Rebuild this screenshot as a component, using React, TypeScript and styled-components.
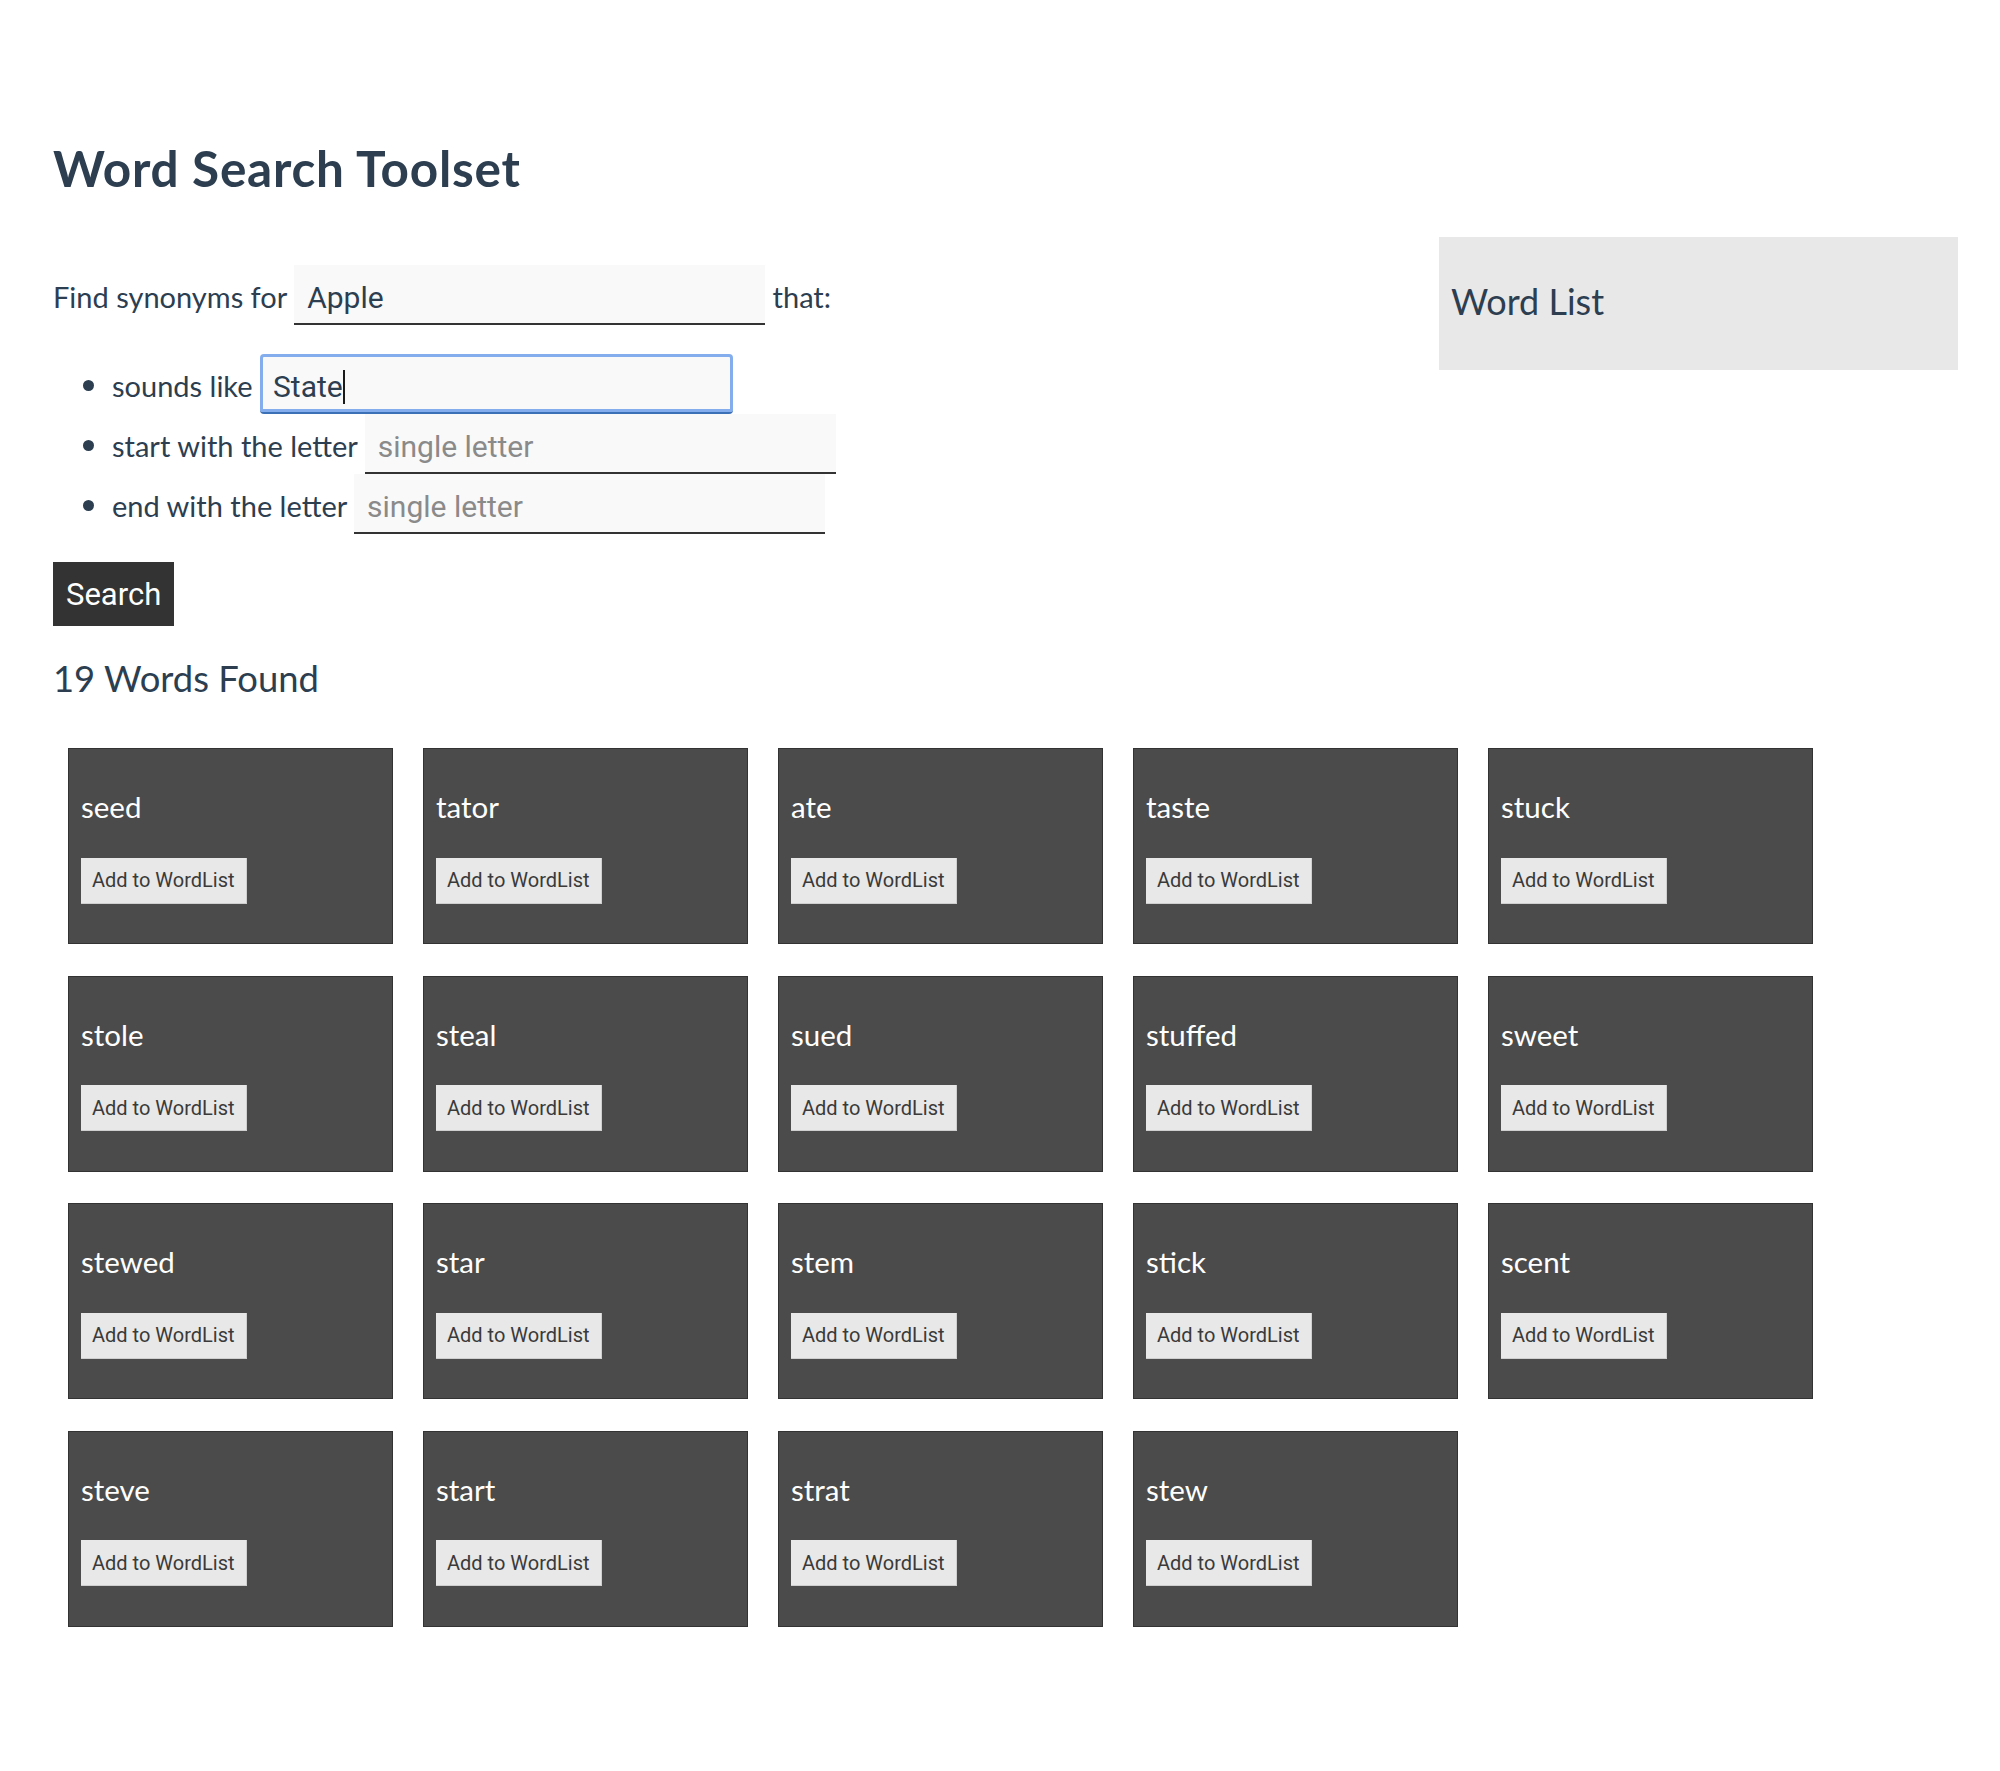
import React from "react";
import styled, { createGlobalStyle, css } from "styled-components";

const GlobalStyle = createGlobalStyle`
  html, body { margin: 0; padding: 0; background: #ffffff; }
  body {
    font-family: Lato, "Noto Sans", sans-serif;
    color: #2c3e50;
    -webkit-font-smoothing: antialiased;
  }
  * { box-sizing: border-box; }
`;

const Page = styled.div`
  padding: 0 42px 120px 53px;
`;

const Top = styled.div`
  display: flex;
  align-items: flex-start;
  justify-content: space-between;
`;

const Main = styled.div`
  flex: 1;
`;

const Title = styled.h1`
  margin: 138px 0 0;
  font-size: 49.5px;
  font-weight: 700;
  line-height: normal;
  letter-spacing: 0.75px;
`;

const Form = styled.form`
  margin: 0;
`;

const Line = styled.div`
  margin-top: 67px;
  font-size: 29px;
  line-height: normal;
  white-space: nowrap;
`;

const Criteria = styled.ul`
  margin: 29px 0 28px;
  padding-left: 59px;
  font-size: 29px;
  line-height: normal;
`;

const Criterion = styled.li`
  white-space: nowrap;
  &::marker { font-size: 33px; }
`;

const Field = styled.span`
  position: relative;
  display: inline-block;
  vertical-align: baseline;
`;

const TextInput = styled.input<{ $focused?: boolean }>`
  width: 471px;
  height: 60px;
  padding: 6px 13px 0;
  border: none;
  border-bottom: 2px solid #333;
  background: #f9f9f9;
  font-family: Roboto, "Liberation Sans", sans-serif;
  font-size: 30px;
  color: #2c3e50;
  vertical-align: baseline;
  outline: none;
  &::placeholder { color: #8a8a8a; }
  ${(p) =>
    p.$focused &&
    css`
      width: 473px;
      border-radius: 4px;
      border-bottom-color: #3b6fb6;
      box-shadow: inset 0 0 0 3px rgba(110, 160, 235, 0.85);
    `}
`;

const Caret = styled.span`
  position: absolute;
  left: 83px;
  top: 16px;
  width: 2px;
  height: 34px;
  background: #1a1a1a;
`;

const SearchButton = styled.button`
  display: block;
  height: 64px;
  padding: 0 13px;
  border: none;
  background: #333333;
  color: #ffffff;
  font-family: Roboto, "Liberation Sans", sans-serif;
  font-size: 31px;
  cursor: pointer;
`;

const Count = styled.h2`
  margin: 30px 0 0;
  font-size: 36.4px;
  font-weight: 400;
  line-height: normal;
`;

const WordListPanel = styled.aside`
  width: 519px;
  height: 133px;
  margin-top: 237px;
  padding: 0 12px 5px;
  background: #e8e8e8;
  display: flex;
  align-items: center;
`;

const PanelTitle = styled.h2`
  margin: 0;
  font-size: 36px;
  font-weight: 400;
  line-height: normal;
`;

const Results = styled.div`
  margin: 48px 0 0 15px;
  display: grid;
  grid-template-columns: repeat(5, 325px);
  column-gap: 30px;
  row-gap: 31.5px;
`;

const Card = styled.div`
  height: 196px;
  padding: 0 12px;
  background: #4b4b4b;
  border: 1px solid #333333;
  display: flex;
  flex-direction: column;
  align-items: flex-start;
`;

const Word = styled.div`
  margin-top: 40px;
  font-size: 29.5px;
  line-height: 36px;
  color: #ffffff;
`;

const AddButton = styled.button`
  margin-top: 32.5px;
  height: 46px;
  padding: 0 11px;
  border: none;
  border-right: 1px solid #cfcfcf;
  border-bottom: 1px solid #cfcfcf;
  background: #e8e8e8;
  color: #3a3a3a;
  font-family: Roboto, "Liberation Sans", sans-serif;
  font-size: 20px;
  cursor: pointer;
`;

const words = [
  "seed", "tator", "ate", "taste", "stuck",
  "stole", "steal", "sued", "stuffed", "sweet",
  "stewed", "star", "stem", "stick", "scent",
  "steve", "start", "strat", "stew",
];

export default function App() {
  return (
    <>
      <GlobalStyle />
      <Page>
        <Top>
          <Main>
            <Title>Word Search Toolset</Title>
            <Form onSubmit={(e) => e.preventDefault()}>
              <Line>
                Find synonyms for <TextInput defaultValue="Apple" /> that:
              </Line>
              <Criteria>
                <Criterion>
                  sounds like{" "}
                  <Field>
                    <TextInput $focused defaultValue="State" />
                    <Caret />
                  </Field>
                </Criterion>
                <Criterion>
                  start with the letter <TextInput placeholder="single letter" />
                </Criterion>
                <Criterion>
                  end with the letter <TextInput placeholder="single letter" />
                </Criterion>
              </Criteria>
              <SearchButton type="submit">Search</SearchButton>
            </Form>
            <Count>19 Words Found</Count>
          </Main>
          <WordListPanel>
            <PanelTitle>Word List</PanelTitle>
          </WordListPanel>
        </Top>
        <Results>
          {words.map((w) => (
            <Card key={w}>
              <Word>{w}</Word>
              <AddButton type="button">Add to WordList</AddButton>
            </Card>
          ))}
        </Results>
      </Page>
    </>
  );
}
